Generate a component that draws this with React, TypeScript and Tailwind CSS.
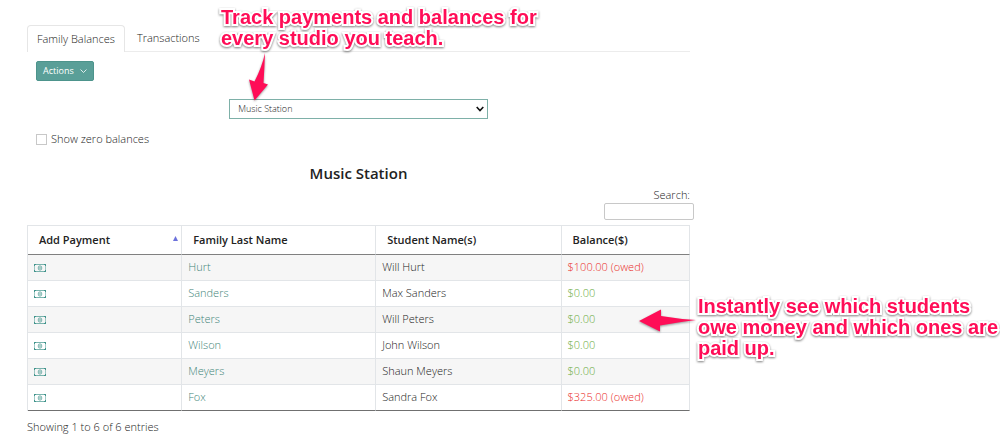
import React from "react";
import clsx from "clsx";

interface Family {
  lastName: string;
  student: string;
  balance: number;
}

const families: Family[] = [
  { lastName: "Hurt", student: "Will Hurt", balance: 100 },
  { lastName: "Sanders", student: "Max Sanders", balance: 0 },
  { lastName: "Peters", student: "Will Peters", balance: 0 },
  { lastName: "Wilson", student: "John Wilson", balance: 0 },
  { lastName: "Meyers", student: "Shaun Meyers", balance: 0 },
  { lastName: "Fox", student: "Sandra Fox", balance: 325 },
];

const CashIcon = () => (
  <svg viewBox="0 0 12 8" className="w-3 h-2" fill="none" stroke="#43958d">
    <path d="M1 .5h10M1 7.5h10" opacity=".7" />
    <path d="M.5 1v6M11.5 1v6" opacity=".5" />
    <path d="M0 .5h2M.5 0v2M10 .5h2M11.5 0v2M0 7.5h2M.5 6v2M10 7.5h2M11.5 6v2" />
    <ellipse cx="6" cy="4" rx="1.8" ry="2.2" strokeWidth=".7" />
    <path d="M6 2.8v2.4" strokeWidth=".9" />
  </svg>
);

const Tabs = () => (
  <nav className="flex h-[27px] border-b border-[#ececec] text-[11px]">
    <a
      href="#balances"
      className="flex items-center h-[27px] px-[9px] bg-white border border-b-0 border-[#e6e6e6] rounded-t-sm"
    >
      Family Balances
    </a>
    <a href="#transactions" className="flex items-center px-3">
      Transactions
    </a>
  </nav>
);

const Toolbar = () => (
  <div className="flex flex-col">
    <button className="flex items-center self-start gap-[6px] h-5 px-[6px] mt-[9px] ml-[9px] text-[9px] font-normal text-white bg-[#5a9f98] border border-[#4d948c] rounded-xs">
      Actions
      <svg viewBox="0 0 7 4" className="w-[7px] h-1" fill="none" stroke="#fff">
        <path d="M.5 .5l3 3 3-3" strokeWidth=".8" />
      </svg>
    </button>
    <div className="relative self-center w-[39%] mt-[18px]">
      <select
        aria-label="Studio"
        className="block w-full h-5 pl-2 text-[9px] bg-white border border-[#7eb0a8] appearance-none"
      >
        <option>Music Station</option>
      </select>
      <svg
        viewBox="0 0 8 6"
        className="absolute right-1 top-[7px] w-2 h-1.5 pointer-events-none"
        fill="none"
        stroke="#111"
      >
        <path d="M.7 1l3.3 3.5L7.3 1" strokeWidth="1.6" />
      </svg>
    </div>
    <label className="flex items-center self-start gap-1 mt-3 ml-[9px] h-4 text-[11px]">
      <input
        type="checkbox"
        className="w-[11px] h-[11px] bg-white border border-[#c8c8c8] appearance-none"
      />
      Show zero balances
    </label>
  </div>
);

const Balance = ({ amount }: { amount: number }) => (
  <span className={amount > 0 ? "text-[#ea2b1f]" : "text-[#6aab3c]"}>
    ${amount.toFixed(2)}
    {amount > 0 && " (owed)"}
  </span>
);

const BalanceTable = () => (
  <table className="w-full mt-[5px] text-[11px] text-left border-separate border-spacing-0 table-fixed border-l border-t border-[#e2e5e8]">
    <thead>
      <tr className="h-[29px] text-[#222] *:border-r *:border-b *:border-r-[#e2e5e8] *:border-b-[#808080] *:px-[11px] *:py-0 *:font-semibold">
        <th className="w-[23.3%]">
          <div className="flex items-center justify-between -mr-2">
            Add Payment
            <svg viewBox="0 0 5 5" className="w-[5px] h-[5px] mb-1">
              <path d="M2.5 0L5 5H0z" fill="#6c72dc" />
            </svg>
          </div>
        </th>
        <th className="w-[29.3%]">Family Last Name</th>
        <th className="w-[28%]">Student Name(s)</th>
        <th>Balance($)</th>
      </tr>
    </thead>
    <tbody>
      {families.map(({ lastName, student, balance }, i) => (
        <tr
          key={lastName}
          className={clsx(
            "h-[26px] *:border-r *:border-b *:border-[#e2e5e8] *:px-[6px] *:py-0 last:*:border-b-[#707070]",
            i % 2 === 0 && "bg-[#f6f6f6]"
          )}
        >
          <td>
            <a href="#payment" aria-label="Add payment" className="block">
              <CashIcon />
            </a>
          </td>
          <td>
            <a href="#family" className="text-[#3f8579]">
              {lastName}
            </a>
          </td>
          <td>{student}</td>
          <td>
            <Balance amount={balance} />
          </td>
        </tr>
      ))}
    </tbody>
  </table>
);

interface NoteProps {
  className: string;
  children: React.ReactNode;
}

const Note = ({ className, children }: NoteProps) => (
  <p
    className={clsx(
      "absolute font-['Liberation_Sans',Arial,sans-serif] text-[20px] leading-[21px] font-bold text-[#ff0d57] whitespace-nowrap [-webkit-text-stroke:4px_#fff] [paint-order:stroke_fill] [filter:drop-shadow(0_1px_1px_rgba(0,0,0,0.5))]",
      className
    )}
  >
    {children}
  </p>
);

const App: React.FC = () => (
  <div className="relative bg-white font-['Open_Sans',sans-serif] font-light text-[#222]">
    <main className="pt-[25px] pb-3 ml-[27px] mr-[310px]">
      <Tabs />
      <Toolbar />
      <h1 className="mt-4 text-[15px] leading-5 font-semibold text-center">
        Music Station
      </h1>
      <label className="flex flex-col items-end mt-1 -mr-1 text-[11px] leading-4">
        <span className="mr-1">Search:</span>
        <input
          type="search"
          className="w-[90px] h-[17px] px-1 bg-white border border-[#c8c8c8] rounded-xs"
        />
      </label>
      <BalanceTable />
      <p className="mt-2 text-[11px] leading-4">Showing 1 to 6 of 6 entries</p>
    </main>

    <Note className="left-[221px] top-[7px]">
      Track payments and balances for
      <br />
      every studio you teach.
    </Note>
    <svg
      viewBox="0 0 24 52"
      className="absolute left-[246px] top-[52px] w-6 h-[52px] [filter:drop-shadow(0_1px_1px_rgba(0,0,0,0.4))]"
    >
      <path d="M19 1Q18.500 15 17.500 31l4.500 1.500L8.500 48.500 3 27.500l5.500 2Q16 15 19 1z" fill="#ff0d57" />
    </svg>

    <Note className="right-[2px] top-[296px]">
      Instantly see which students
      <br />
      owe money and which ones are
      <br />
      paid up.
    </Note>
    <svg
      viewBox="0 0 60 26"
      className="absolute right-[303px] top-[308px] w-[60px] h-[26px] [filter:drop-shadow(0_1px_1px_rgba(0,0,0,0.4))]"
    >
      <path d="M59 12Q42 11 24 8l0-6.500L2 13l21 10.500 0-6Q42 14 59 12z" fill="#ff0d57" />
    </svg>
  </div>
);

export default App;
